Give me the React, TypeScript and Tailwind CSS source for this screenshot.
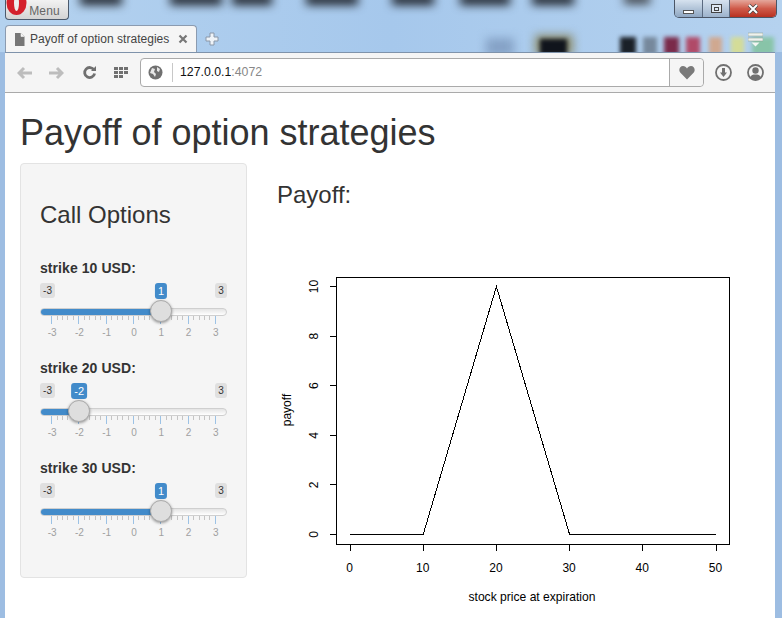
import React from "react";

function Slider({ label, value }: { label: string; value: number }) {
  const cx = 93.8 + 27.3 * value;
  const majors = [-3, -2, -1, 0, 1, 2, 3];
  const ticks: React.ReactNode[] = [];
  majors.forEach((m, i) => {
    const x = 93.5 + 27.3 * m;
    ticks.push(<line key={"M" + m} x1={x} x2={x} y1={0} y2={8} stroke="#9cc2e5" />);
    if (i < 6) {
      for (let k = 1; k < 5; k++) {
        const xx = x + (27.3 * k) / 5;
        ticks.push(<line key={m + "-" + k} x1={xx} x2={xx} y1={0} y2={4} stroke="#c4c4c4" />);
      }
    }
  });
  return (
    <div className="h-[100px] w-[187px]">
      <div className="h-[25px] text-[14px] leading-[20px] font-bold tracking-[0.07px] text-[#333]">{label}</div>
      <div className="relative h-[60px]">
        <div className="flex justify-between">
          <span className="h-[15px] w-[15px] rounded-[3px] bg-[#e0e0e0] text-center text-[10px] leading-[15px] text-[#333]">-3</span>
          <span className="h-[15px] w-[12px] rounded-[3px] bg-[#e0e0e0] text-center text-[10px] leading-[15px] text-[#333]">3</span>
        </div>
        <div
          className="absolute top-0 h-[16px] -translate-x-1/2 rounded-[3px] bg-[#428bca] px-[3px] text-center text-[11px] leading-[16px] text-white"
          style={{ left: cx }}
        >
          {value}
        </div>
        <div className="relative mt-[10px] h-[8px] overflow-hidden rounded-[4px] border border-[#cfcfcf] bg-gradient-to-b from-[#e4e4e4] to-white">
          <div className="absolute -left-px -top-px h-[8px] bg-[#428bca]" style={{ width: cx }} />
        </div>
        <div
          className="absolute top-[17px] h-[22px] w-[22px] -translate-x-1/2 rounded-full border border-[#ababab] bg-[#dedede] shadow-[0_1px_3px_rgba(0,0,0,0.4)]"
          style={{ left: cx }}
        />
        <svg width="187" height="9" className="block" shapeRendering="crispEdges">
          {ticks}
        </svg>
        <div className="relative h-[12px] text-[10px] leading-[16px] text-[#a0a0a0]">
          {majors.map((m) => (
            <span key={m} className="absolute top-0 -translate-x-1/2" style={{ left: 94 + 27.3 * m }}>
              {m}
            </span>
          ))}
        </div>
      </div>
    </div>
  );
}

function Plot() {
  const xs = [0, 10, 20, 30, 40, 50];
  const ys = [0, 2, 4, 6, 8, 10];
  const px = (v: number) => 350 + v * 7.32;
  const py = (v: number) => 534.5 - v * 24.8;
  return (
    <svg width="480" height="378" className="mt-[18px] block" viewBox="277 240 480 378" fontFamily="'Liberation Sans', Arial, sans-serif" fontSize="12" fill="#000">
      <g shapeRendering="crispEdges" stroke="#000" fill="none">
        <rect x="336.5" y="277.5" width="392.500" height="267" />
        {xs.map((v) => (
          <line key={v} x1={px(v)} x2={px(v)} y1={544} y2={551} />
        ))}
        {ys.map((v) => (
          <line key={v} x1={330} x2={337} y1={py(v)} y2={py(v)} />
        ))}
        <polyline points={`${px(0)},534.5 ${px(10)},534.5 ${px(20)},286.5 ${px(30)},534.5 ${px(50)},534.5`} />
      </g>
      {xs.map((v) => (
        <text key={v} x={px(v) - 0.5} y={571.5} textAnchor="middle">
          {v}
        </text>
      ))}
      {ys.map((v) => (
        <text key={v} transform={`translate(318 ${py(v)}) rotate(-90)`} textAnchor="middle">
          {v}
        </text>
      ))}
      <text x="532" y="601" textAnchor="middle" fontSize="12.1">stock price at expiration</text>
      <text transform="translate(291 410) rotate(-90)" textAnchor="middle">payoff</text>
    </svg>
  );
}

const Blob = ({ className }: { className: string }) => <div className={"absolute blur-[5px] " + className} />;

export default function App() {
  return (
    <div className="relative h-[618px] w-[782px] overflow-hidden bg-[#9dbde2] font-['Liberation_Sans',Arial,sans-serif]">
      {/* blurred desktop behind the browser frame */}
      <div className="absolute inset-x-0 top-0 h-[52px] overflow-hidden bg-gradient-to-r from-[#b4d2ef] via-[#a6c8ec] to-[#b5d2ef]">
        <Blob className="left-[80px] top-[-6px] h-[11px] w-[42px] bg-[#20252d]" />
        <Blob className="left-[170px] top-[-6px] h-[11px] w-[52px] bg-[#20252d]" />
        <Blob className="left-[232px] top-[-6px] h-[11px] w-[40px] bg-[#20252d]" />
        <Blob className="left-[306px] top-[-6px] h-[11px] w-[52px] bg-[#20252d]" />
        <Blob className="left-[392px] top-[-6px] h-[11px] w-[42px] bg-[#20252d]" />
        <Blob className="left-[460px] top-[-6px] h-[11px] w-[50px] bg-[#20252d]" />
        <Blob className="left-[532px] top-[-6px] h-[11px] w-[42px] bg-[#20252d]" />
        <Blob className="left-[624px] top-[-6px] h-[10px] w-[26px] bg-[#40444a]" />
        <Blob className="left-[486px] top-[38px] h-[18px] w-[28px] bg-[#85a2c6]" />
        <Blob className="left-[535px] top-[35px] h-[20px] w-[38px] bg-[#8a8a6a]" />
        <div className="absolute left-[540px] top-[39px] h-[16px] w-[27px] bg-[#10141c] blur-[2px]" />
        <div className="absolute left-[620px] top-[37px] h-[18px] w-[16px] bg-[#1a2028] blur-[2px]" />
        <div className="absolute left-[643px] top-[37px] h-[18px] w-[14px] bg-[#76889c] blur-[2px]" />
        <div className="absolute left-[664px] top-[37px] h-[18px] w-[15px] bg-[#7a2a4a] blur-[2px]" />
        <div className="absolute left-[686px] top-[37px] h-[18px] w-[14px] bg-[#b04a68] blur-[2px]" />
        <div className="absolute left-[709px] top-[37px] h-[18px] w-[13px] bg-[#d0a890] blur-[2px]" />
        <div className="absolute left-[731px] top-[37px] h-[18px] w-[13px] bg-[#d4dc98] blur-[2px]" />
        <div className="absolute left-[752px] top-[37px] h-[18px] w-[22px] bg-[#88c4a8] blur-[2px]" />
      </div>

      <div className="relative flex h-full flex-col">
        {/* title bar */}
        <div className="flex h-[25px] items-start justify-between pl-[5px] pr-[5px]">
          <div className="relative flex h-[20px] w-[64px] items-end justify-end overflow-hidden rounded-b-[4px] border border-t-0 border-[#4c5a6c] bg-gradient-to-b from-[#f2f2f2] to-[#d4d4d4] pr-[8px] pb-[1px] text-[12px] leading-[14px] tracking-[0.2px] text-[#666]">
            <svg width="22" height="20" viewBox="0 0 22 20" className="absolute left-0 top-0">
              <ellipse cx="10.500" cy="3" rx="10" ry="12" fill="#d4202c" />
              <ellipse cx="10.500" cy="3" rx="2.500" ry="8" fill="#eeeeee" />
            </svg>
            Menu
          </div>
          <div className="flex h-[18px] w-[103px] overflow-hidden rounded-b-[5px] border border-t-0 border-[#4a5566]">
            <div className="flex w-[28px] items-end justify-center border-r border-[#5a6a80] bg-gradient-to-b from-[#d6e2ef] to-[#8fa7c2] pb-[3px]">
              <div className="h-[4px] w-[11px] border border-[#555] bg-white" />
            </div>
            <div className="flex w-[27px] items-center justify-center border-r border-[#5a6a80] bg-gradient-to-b from-[#d6e2ef] to-[#9db3cc]">
              <div className="flex h-[9px] w-[11px] items-center justify-center border border-[#444] bg-[#dfe8f2]">
                <div className="h-[4px] w-[5px] border border-[#444]" />
              </div>
            </div>
            <div className="flex flex-1 items-center justify-center bg-gradient-to-b from-[#e4a79c] via-[#cf5a4a] to-[#b83020]">
              <svg width="12" height="10" viewBox="0 0 12 10">
                <path d="M2 1l8 8M10 1L2 9" stroke="#444" strokeWidth="3.4" />
                <path d="M2 1l8 8M10 1L2 9" stroke="#fff" strokeWidth="2" />
              </svg>
            </div>
          </div>
        </div>

        {/* tab strip */}
        <div className="flex h-[27px] items-stretch pl-[5px] pr-[19px]">
          <div className="flex w-[192px] items-center rounded-t-[4px] border border-b-0 border-[#8b9bb0] bg-[#f5f5f5] pl-[8px] pr-[8px] text-[12px] text-[#444]">
            <svg width="11" height="13" viewBox="0 0 11 13" className="mr-[5px] shrink-0">
              <path d="M1 0h6l3.500 3.500V13H1z" fill="#777" />
              <path d="M7 0v3.500h3.500" fill="#f5f5f5" stroke="#f5f5f5" strokeWidth="0.6" />
            </svg>
            <span className="flex-1 whitespace-nowrap tracking-[0.03px]">Payoff of option strategies</span>
            <svg width="10" height="10" viewBox="0 0 10 10" className="shrink-0">
              <path d="M1.500 1.500l7 7M8.500 1.500l-7 7" stroke="#777" strokeWidth="2.200" />
            </svg>
          </div>
          <svg width="14" height="14" viewBox="0 0 14 14" className="ml-[8px] mt-[7px]">
            <path d="M5 1h4v4h4v4H9v4H5V9H1V5h4z" fill="#eef3f8" stroke="#8a97a8" />
          </svg>
          <div className="flex-1" />
          <svg width="15" height="15" viewBox="0 0 15 15" className="mt-[7px]">
            <path d="M0 1h15v3H0zM0 6h15v3H0z" fill="#eef2ee" stroke="#8a9a8a" strokeWidth="0.5" />
            <path d="M3.500 10.500h8l-4 4z" fill="#f2f5f2" />
          </svg>
        </div>

        {/* browser window */}
        <div className="mx-[5px] flex min-h-0 flex-1 w-[770px] flex-col">
          <div className="flex h-[41px] items-center border-y border-t-[#7f93ab] border-b-[#aaaaaa] bg-[#f5f5f5] pl-[12px] pr-[11px]">
            <svg width="16" height="14" viewBox="0 0 16 14" className="mr-[15px]">
              <path d="M7 2L2 7l5 5M2.500 7H15" fill="none" stroke="#bdbdbd" strokeWidth="3" />
            </svg>
            <svg width="16" height="14" viewBox="0 0 16 14" className="mr-[18px]">
              <path d="M9 2l5 5-5 5M13.500 7H1" fill="none" stroke="#bdbdbd" strokeWidth="3" />
            </svg>
            <svg width="15" height="15" viewBox="0 0 15 15" className="mr-[17px]">
              <path d="M12 5a5 5 0 1 0 .6 3.400" fill="none" stroke="#707070" strokeWidth="2.800" />
              <path d="M9 6h5V1z" fill="#707070" />
            </svg>
            <svg width="14" height="11" viewBox="0 0 14 11" className="mr-[12px]" fill="#707070">
              <path d="M0 0h4v3H0zM5 0h4v3H5zM10 0h4v3h-4zM0 4h4v3H0zM5 4h4v3H5zM10 4h4v3h-4zM0 8h4v3H0zM5 8h4v3H5z" />
            </svg>
            <div className="flex h-[29px] w-[564px] items-stretch rounded-[4px] border border-[#aaaaaa] bg-white">
              <div className="flex w-[31px] items-center justify-end pr-[9px]">
                <svg width="15" height="15" viewBox="0 0 15 15">
                  <circle cx="7.500" cy="7.500" r="7" fill="#707070" />
                  <path d="M4 3l3 1-1 3 2 2-1 3-2-3-3-1zM9 2l3 2-1 3-2-1z" fill="#e8e8e8" />
                </svg>
              </div>
              <div className="my-[4px] w-px bg-[#c8c8c8]" />
              <div className="flex flex-1 items-center pl-[7px] text-[12.3px] text-[#111]">
                127.0.0.1<span className="text-[#888]">:4072</span>
              </div>
              <div className="flex w-[34px] items-center justify-center rounded-r-[4px] border-l border-[#aaaaaa] bg-[#f5f5f5]">
                <svg width="16" height="15" viewBox="0 0 16 15">
                  <path d="M8 14.500L1.200 7.500C-.8 4.800.8 1 4 1c1.800 0 3.200 1 4 2.400C8.800 2 10.200 1 12 1c3.200 0 4.800 3.800 2.800 6.500z" fill="#7a7a7a" />
                </svg>
              </div>
            </div>
            <div className="flex flex-1 items-center justify-end gap-[15px]">
              <svg width="17" height="17" viewBox="0 0 17 17">
                <circle cx="8.500" cy="8.500" r="7.500" fill="none" stroke="#707070" strokeWidth="1.800" />
                <path d="M7 4h3v4.500h2L8.500 13 5 8.500h2z" fill="#707070" />
              </svg>
              <svg width="17" height="17" viewBox="0 0 17 17">
                <circle cx="8.500" cy="8.500" r="7.500" fill="none" stroke="#707070" strokeWidth="1.800" />
                <circle cx="8.500" cy="6.500" r="3.200" fill="#707070" />
                <path d="M3 13.500c1-2.500 3-3 5.500-3s4.500.5 5.500 3a7 7 0 0 1-11 0z" fill="#707070" />
              </svg>
            </div>
          </div>

          {/* page */}
          <div className="flex-1 overflow-hidden bg-white pl-[15px] text-[#333]">
            <h1 className="mt-[20px] h-[50px] text-[36px] leading-[40px] font-normal">Payoff of option strategies</h1>
            <div className="flex">
              <div className="h-[415px] w-[227px] shrink-0 rounded-[4px] border border-[#e3e3e3] bg-[#f5f5f5] px-[19px] pt-[38px]">
                <h3 className="h-[56px] text-[24px] leading-[26px] font-normal">Call Options</h3>
                <Slider label="strike 10 USD:" value={1} />
                <Slider label="strike 20 USD:" value={-2} />
                <Slider label="strike 30 USD:" value={1} />
              </div>
              <div className="ml-[30px] min-w-0 flex-1 pt-[19px]">
                <h3 className="h-[40px] text-[24px] leading-[26px] font-normal">Payoff:</h3>
                <Plot />
              </div>
            </div>
          </div>
        </div>
      </div>
    </div>
  );
}
